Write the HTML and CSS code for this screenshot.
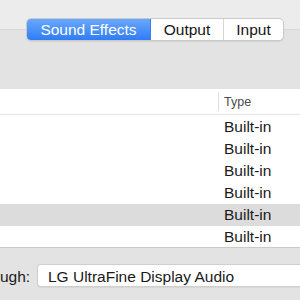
FILE: index.html
```html
<!DOCTYPE html>
<html>
<head>
    <meta charset="utf-8">
    <title>Sound</title>
    <link rel="stylesheet" href="styles.css">
</head>
<body>
<div class="window">
    <div class="tab-bar">
        <div class="segment is-selected">Sound Effects</div>
        <div class="segment">Output</div>
        <div class="segment">Input</div>
    </div>
    <div class="pane">
        <div class="device-table">
            <div class="table-head">
                <div class="cell cell-name"></div>
                <div class="cell cell-type">Type</div>
            </div>
            <div class="table-body">
                <div class="row"><div class="cell cell-name"></div><div class="cell cell-type">Built-in</div></div>
                <div class="row"><div class="cell cell-name"></div><div class="cell cell-type">Built-in</div></div>
                <div class="row"><div class="cell cell-name"></div><div class="cell cell-type">Built-in</div></div>
                <div class="row"><div class="cell cell-name"></div><div class="cell cell-type">Built-in</div></div>
                <div class="row is-selected"><div class="cell cell-name"></div><div class="cell cell-type">Built-in</div></div>
                <div class="row"><div class="cell cell-name"></div><div class="cell cell-type">Built-in</div></div>
            </div>
        </div>
        <div class="output-line">
            <div class="output-label">ugh:</div>
            <div class="popup">LG UltraFine Display Audio</div>
        </div>
    </div>
</div>
</body>
</html>
```

FILE: styles.css
```css
body {
    margin: 0;
    width: 300px;
    height: 300px;
    overflow: hidden;
    background: #ececec;
    font-family: "Liberation Sans", Arial, sans-serif;
    font-size: 15.5px;
    color: #1a1a1a;
}

.window {
    padding-top: 18px;
    height: 282px;
    display: flex;
    flex-direction: column;
}

.tab-bar {
    position: relative;
    z-index: 1;
    display: flex;
    margin-left: 26px;
    width: 258px;
    height: 23px;
    box-sizing: border-box;
    border: 1px solid #c9c9c9;
    border-radius: 5px;
    background: #fff;
    box-shadow: 0 1px 1px rgba(0, 0, 0, 0.08);
    overflow: hidden;
}

.segment {
    display: flex;
    align-items: center;
    justify-content: center;
    border-right: 1px solid #d6d6d6;
    color: #141414;
}

.segment:nth-child(1) {
    width: 123px;
}

.segment:nth-child(2) {
    width: 72px;
}

.segment:last-child {
    flex: 1;
    border-right: 0;
}

.segment.is-selected {
    background: linear-gradient(#6aa8fb, #2f7cf6);
    color: #fff;
    border-right-color: #3a7ef2;
}

.pane {
    flex: 1;
    margin-top: -12px;
    padding-top: 59px;
    background: #e3e3e3;
    border-top: 1px solid #d9d9d9;
    display: flex;
    flex-direction: column;
}

.device-table {
    height: 158px;
    background: #fff;
    border-bottom: 1px solid #cacaca;
    overflow: hidden;
}

.table-head {
    display: flex;
    height: 25px;
    border-bottom: 1px solid #e3e3e3;
    font-size: 12.5px;
    color: #4c4c4c;
}

.table-head .cell-type {
    border-left: 1px solid #dedede;
    margin: 3px 0 3px 0;
    padding-left: 5px;
}

.table-body {
    padding-top: 1px;
}

.row {
    display: flex;
    height: 22px;
}

.row.is-selected {
    background: #dcdcdc;
}

.cell {
    display: flex;
    align-items: center;
}

.cell-name {
    width: 218px;
}

.row .cell-type {
    padding-left: 6px;
}

.output-line {
    display: flex;
    align-items: center;
    margin-top: 16px;
    height: 23px;
}

.output-label {
    width: 29px;
    white-space: nowrap;
    padding-top: 2px;
}

.popup {
    margin-left: 8px;
    flex: 1;
    height: 23px;
    box-sizing: border-box;
    border: 1px solid #cfcfcf;
    border-right: 0;
    border-radius: 4px 0 0 4px;
    background: #fff;
    box-shadow: 0 1px 1px rgba(0, 0, 0, 0.06);
    padding: 2px 0 0 10px;
    display: flex;
    align-items: center;
    white-space: nowrap;
}
```
